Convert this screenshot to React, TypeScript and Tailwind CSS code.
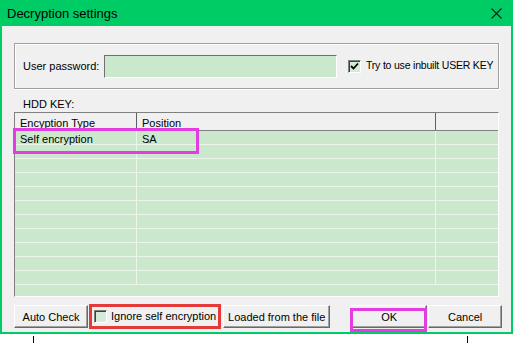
import React from "react";

const Btn = ({ label, w, ml }: { label: string; w: string; ml: string }) => (
  <div
    className={`${w} ${ml} h-[23px] flex items-center justify-center bg-[#f0f0f0] border border-t-white border-l-white border-r-[#696969] border-b-[#696969] shadow-[inset_-1px_-1px_0_#a0a0a0] text-[11px] text-black pt-[1px]`}
  >
    {label}
  </div>
);

const Check = ({ checked }: { checked?: boolean }) => (
  <div className="w-[13px] h-[13px] shrink-0 border border-t-[#808080] border-l-[#808080] border-r-white border-b-white bg-[#d4ebd6] flex items-center justify-center shadow-[inset_1px_1px_0_#404040]">
    {checked && (
      <svg width="9" height="9" viewBox="0 0 9 9">
        <path d="M1 4 L3.5 6.5 L8 1.5" stroke="#000" strokeWidth="1.8" fill="none" />
      </svg>
    )}
  </div>
);

export default function App() {
  const rows = Array.from({ length: 11 });
  return (
    <div className="w-[515px] h-[343px] bg-white relative overflow-hidden font-['Liberation_Sans',Arial,sans-serif] text-black">
      <div className="w-[513px] h-[334px] flex flex-col border-x-2 border-b-2 border-[#00cc66] bg-[#f0f0f0]">
        {/* title bar */}
        <div className="h-[26px] bg-[#00cc66] flex items-center justify-between pl-[5px] pr-[9px] shrink-0">
          <span className="text-[13px] leading-none">Decryption settings</span>
          <svg width="11" height="11" viewBox="0 0 11 11">
            <path d="M0.5 0.5 L10.5 10.5 M10.5 0.5 L0.5 10.5" stroke="#1a1a1a" strokeWidth="1.1" />
          </svg>
        </div>

        {/* group box */}
        <div className="ml-[12px] mt-[17px] w-[485px] h-[46px] border border-[#a0a0a0] shadow-[inset_1px_1px_0_white,1px_1px_0_white] flex items-center text-[11px] overflow-hidden">
          <span className="w-[89px] shrink-0 pl-[8px] whitespace-nowrap">User password:</span>
          <div className="w-[233px] h-[23px] bg-[#c9e8cc] border border-t-[#707070] border-l-[#707070] border-r-white border-b-white shrink-0" />
          <div className="ml-[11px] flex items-center">
            <Check checked />
          </div>
          <span className="ml-[5px] whitespace-nowrap text-[10.5px] tracking-[-0.2px]">Try to use inbuilt USER KEY</span>
        </div>

        {/* HDD KEY */}
        <div className="ml-[21px] mt-[9px] text-[11px] leading-[13px]">HDD KEY:</div>

        {/* table */}
        <div className="ml-[12px] mt-[1px] w-[485px] h-[185px] border border-t-[#808080] border-l-[#808080] border-r-white border-b-white bg-[#cbe8cc] flex flex-col overflow-hidden text-[11px]">
          <div className="h-[18px] shrink-0 flex bg-[#f0f0f0] border-b border-[#808080] leading-[12px]">
            <div className="w-[122px] border-r border-[#606060] pl-[5px] pt-[4px]">Encyption Type</div>
            <div className="w-[299px] border-r border-[#606060] pl-[5px] pt-[4px]">Position</div>
            <div className="flex-1" />
          </div>
          {rows.map((_, i) => (
            <div key={i} className="h-[14px] shrink-0 flex border-b border-[#eaf6ea] leading-[12px]">
              <div className="w-[122px] border-r border-[#eaf6ea] pl-[5px] pt-[2px]">
                {i === 0 ? "Self encryption" : ""}
              </div>
              <div className="w-[299px] border-r border-[#eaf6ea] pl-[5px] pt-[2px]">
                {i === 0 ? "SA" : ""}
              </div>
              <div className="flex-1" />
            </div>
          ))}
        </div>

        {/* buttons */}
        <div className="mt-[8px] flex items-center">
          <Btn label="Auto Check" w="w-[74px]" ml="ml-[12px]" />
          <div className="ml-[6px] flex items-center">
            <Check />
            <span className="ml-[4px] text-[11px] whitespace-nowrap">Ignore self encryption</span>
          </div>
          <Btn label="Loaded from the file" w="w-[107px]" ml="ml-[7px]" />
          <Btn label="OK" w="w-[76px]" ml="ml-[21px]" />
          <Btn label="Cancel" w="w-[74px]" ml="ml-[1px]" />
        </div>
      </div>

      {/* background strip below window */}
      <div className="flex h-[9px]">
        <div className="ml-[33px] mt-[2px] w-px h-[7px] bg-black" />
        <div className="ml-[433px] mt-[2px] w-px h-[7px] bg-black" />
      </div>

      {/* annotation boxes */}
      <div className="absolute left-[13px] top-[128px] w-[186px] h-[26px] border-[3px] border-[#e23ce2]" />
      <div className="absolute left-[89px] top-[304px] w-[132px] h-[25px] border-[3px] border-[#e43a3a]" />
      <div className="absolute left-[350px] top-[308px] w-[77px] h-[24px] border-[3px] border-[#e23ce2]" />
    </div>
  );
}
